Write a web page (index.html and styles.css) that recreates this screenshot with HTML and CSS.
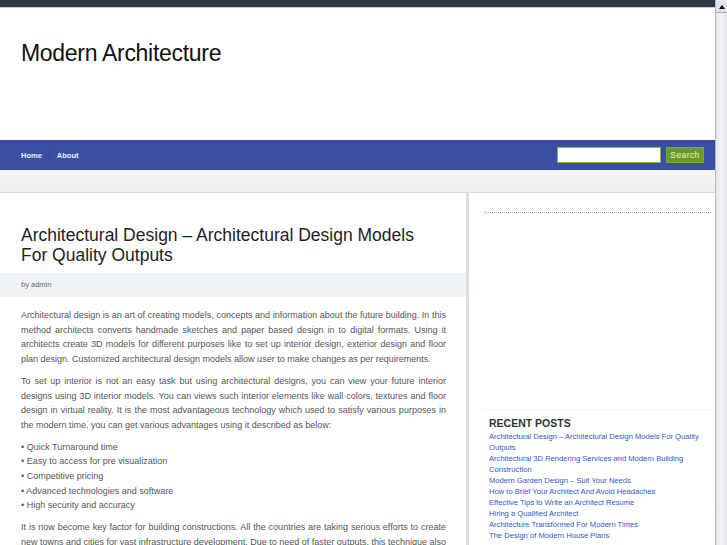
FILE: index.html
```html
<!DOCTYPE html>
<html>
<head>
<meta charset="utf-8">
<title>Modern Architecture</title>
<link rel="stylesheet" href="styles.css">
</head>
<body>
<div class="window">
  <div class="page">
    <div class="topbar"></div>
    <header class="masthead">
      <h1 class="site-title">Modern Architecture</h1>
    </header>
    <nav class="navbar">
      <ul class="menu">
        <li><a href="#">Home</a></li>
        <li><a href="#">About</a></li>
      </ul>
      <form class="search">
        <input class="search-input" type="text">
        <button class="search-btn" type="button">Search</button>
      </form>
    </nav>
    <div class="subbar"></div>
    <div class="main">
      <article class="content">
        <h2 class="post-title">Architectural Design – Architectural Design Models For Quality Outputs</h2>
        <div class="meta">by admin</div>
        <div class="entry">
          <p>Architectural design is an art of creating models, concepts and information about the future building. In this method architects converts handmade sketches and paper based design in to digital formats. Using it architects create 3D models for different purposes like to set up interior design, exterior design and floor plan design. Customized architectural design models allow user to make changes as per requirements.</p>
          <p>To set up interior is not an easy task but using architectural designs, you can view your future interior designs using 3D interior models. You can views such interior elements like wall colors, textures and floor design in virtual reality. It is the most advantageous technology which used to satisfy various purposes in the modern time. you can get various advantages using it described as below:</p>
          <p>• Quick Turnaround time<br>• Easy to access for pre visualization<br>• Competitive pricing<br>• Advanced technologies and software<br>• High security and accuracy</p>
          <p>It is now become key factor for building constructions. All the countries are taking serious efforts to create new towns and cities for vast infrastructure development. Due to need of faster outputs, this technique also plays a vital role in the construction industry across the world.</p>
        </div>
      </article>
      <aside class="sidebar">
        <div class="widget-empty"></div>
        <div class="widget">
          <h3 class="widget-title">RECENT POSTS</h3>
          <ul class="recent">
            <li><a href="#">Architectural Design – Architectural Design Models For Quality Outputs</a></li>
            <li><a href="#">Architectural 3D Rendering Services and Modern Building Construction</a></li>
            <li><a href="#">Modern Garden Design – Suit Your Needs</a></li>
            <li><a href="#">How to Brief Your Architect And Avoid Headaches</a></li>
            <li><a href="#">Effective Tips to Write an Architect Resume</a></li>
            <li><a href="#">Hiring a Qualified Architect</a></li>
            <li><a href="#">Architecture Transformed For Modern Times</a></li>
            <li><a href="#">The Design of Modern House Plans</a></li>
          </ul>
        </div>
      </aside>
    </div>
  </div>
  <div class="scrollbar">
    <div class="scroll-btn"><span class="arrow"></span></div>
    <div class="scroll-track"></div>
  </div>
</div>
</body>
</html>
```

FILE: styles.css
```css
html, body {
  margin: 0;
  padding: 0;
  height: 545px;
  overflow: hidden;
  background: #fff;
  font-family: "Liberation Sans", Arial, sans-serif;
}
.window {
  display: flex;
  height: 545px;
}
.page {
  width: 715px;
  flex: none;
  display: flex;
  flex-direction: column;
  overflow: hidden;
}
.topbar {
  height: 7px;
  background: #2e3742;
  border-bottom: 1px solid #c9cdd2;
  flex: none;
}
.masthead {
  height: 132px;
  flex: none;
  padding: 0 0 0 21px;
}
.site-title {
  margin: 0;
  padding-top: 32px;
  font-size: 23px;
  font-weight: normal;
  letter-spacing: -0.3px;
  color: #111;
  line-height: 26px;
}
.navbar {
  height: 30px;
  flex: none;
  background: #3b4fa2;
  display: flex;
  align-items: center;
  justify-content: space-between;
  padding: 0 11px 0 14px;
}
.menu {
  list-style: none;
  margin: 0;
  padding: 0;
  display: flex;
  height: 14px;
  align-items: center;
}
.menu li {
  padding: 0 7px;
  height: 14px;
  display: flex;
  align-items: center;
}
.menu li + li {
  border-left: 1px solid #34479a;
}
.menu a {
  color: #eef0fa;
  text-decoration: none;
  font-size: 7.5px;
  font-weight: bold;
}
.search {
  display: flex;
  gap: 5px;
  margin: 0;
}
.search-input {
  width: 104px;
  height: 16px;
  box-sizing: border-box;
  border: 1px solid #8bb63e;
  background: #fff;
  padding: 0;
  margin: 0;
}
.search-btn {
  width: 38px;
  height: 16px;
  box-sizing: border-box;
  border: 1px solid #7da92f;
  background: #6b9b1f;
  color: #e3efd0;
  font-family: "Liberation Sans", Arial, sans-serif;
  font-size: 8.5px;
  letter-spacing: 0.4px;
  padding: 0;
  margin: 0;
}
.subbar {
  height: 22px;
  flex: none;
  background: linear-gradient(#f6f6f6, #eeeeee);
  border-bottom: 1px solid #d8dadc;
}
.main {
  display: flex;
  flex: 1;
}
.content {
  width: 466px;
  flex: none;
  border-right: 3px solid #dcdfe2;
}
.post-title {
  margin: 0;
  padding: 32px 21px 8px 21px;
  font-size: 17.5px;
  font-weight: normal;
  line-height: 20px;
  color: #222;
}
.meta {
  background: #eff3f5;
  height: 24px;
  line-height: 24px;
  padding: 0 21px;
  font-size: 7.5px;
  color: #666;
}
.entry {
  padding: 11px 20px 0 21px;
  font-size: 9px;
  line-height: 14.7px;
  color: #555;
  text-align: justify;
}
.entry p {
  margin: 0 0 7px 0;
}
.sidebar {
  flex: 1;
  padding: 19px 4px 0 15px;
}
.widget-empty {
  border-top: 1px dotted #9a9a9a;
  height: 196px;
}
.widget {
  border-top: 1px dotted #e3e3e3;
  padding: 7px 0 0 5px;
}
.widget-title {
  margin: 0 0 1px 0;
  font-size: 10.5px;
  font-weight: bold;
  color: #333;
  line-height: 13px;
}
.recent {
  list-style: none;
  margin: 0;
  padding: 0;
}
.recent li {
  font-size: 7.6px;
  line-height: 11px;
}
.recent a {
  color: #2f56cc;
  text-decoration: none;
}
.scrollbar {
  width: 12px;
  flex: none;
  display: flex;
  flex-direction: column;
  background: #e9ebf1;
  border-left: 1px solid #b4b7bd;
  box-sizing: border-box;
}
.scroll-btn {
  height: 11px;
  margin-top: 1px;
  background: #e2e4e9;
  border-bottom: 1px solid #a8abb1;
  display: flex;
  align-items: center;
  justify-content: center;
}
.arrow {
  width: 0;
  height: 0;
  border-left: 3px solid transparent;
  border-right: 3px solid transparent;
  border-bottom: 4px solid #111;
}
.scroll-track {
  flex: 1;
  background: linear-gradient(90deg, #e4e6ec, #f2f3f7 50%, #e4e6ec);
}
```
